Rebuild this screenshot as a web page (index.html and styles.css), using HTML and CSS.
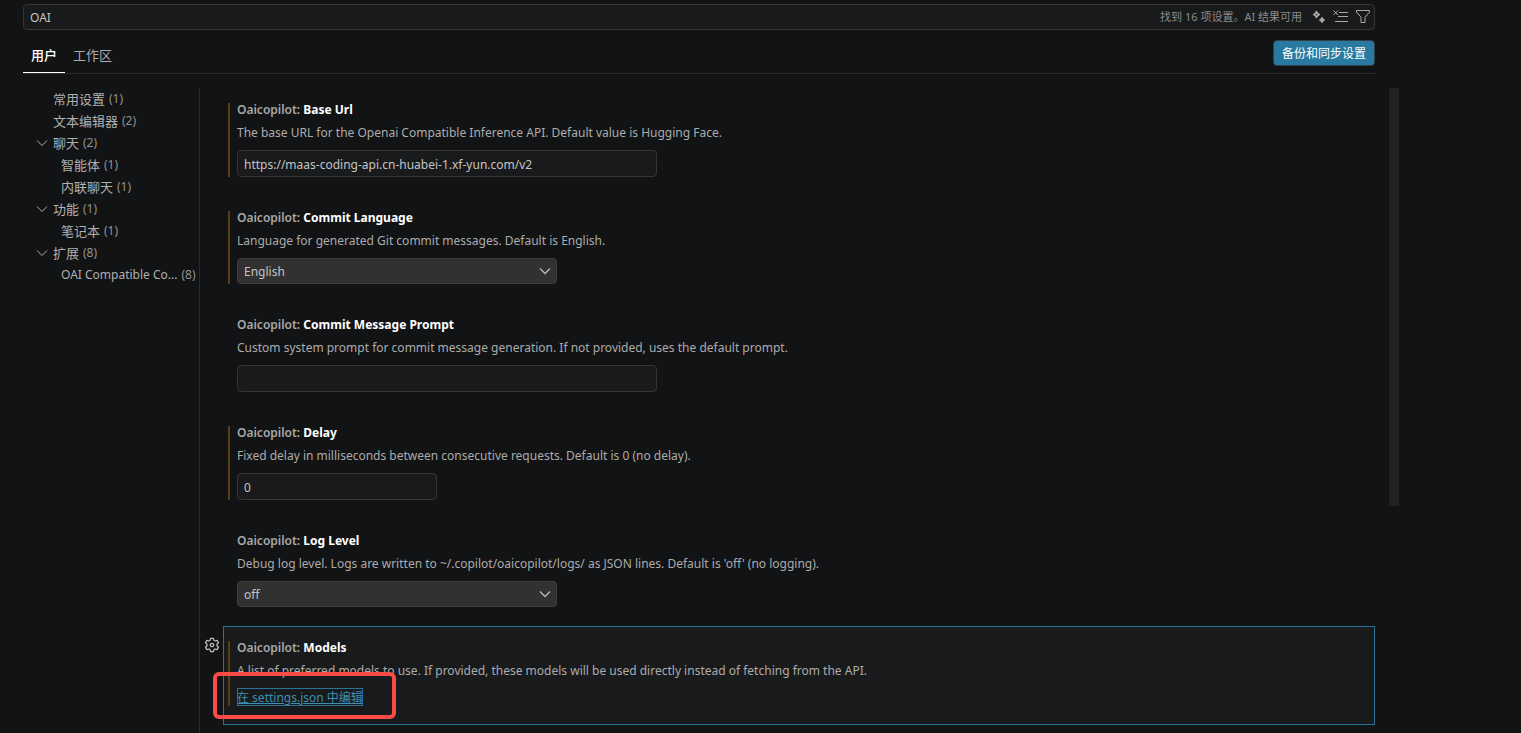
FILE: index.html
```html
<!DOCTYPE html>
<html lang="zh-CN">
<head>
<meta charset="utf-8">
<title>设置</title>
<link rel="stylesheet" href="styles.css">
</head>
<body>
<div class="editor">
  <header class="header">
    <div class="search">
      <input class="search-input" type="text" value="OAI" aria-label="搜索设置">
      <span class="search-count">找到 16 项设置。AI 结果可用</span>
      <button class="icon-button" type="button" aria-label="AI 结果">
        <svg width="16" height="16" viewBox="0 0 16 16" fill="none" stroke="currentColor" stroke-width="1.800" stroke-linejoin="round"><path d="M5.500 2.800L6.500 4.500L8.200 5.500L6.500 6.500L5.500 8.200L4.500 6.500L2.800 5.500L4.500 4.500Z"/><path d="M11 9L11.700 10.300L13 11L11.700 11.700L11 13L10.300 11.700L9 11L10.300 10.300Z"/></svg>
      </button>
      <button class="icon-button" type="button" aria-label="清除搜索">
        <svg width="16" height="16" viewBox="0 0 16 16" fill="none" stroke="currentColor"><path d="M.5 1.500l4.500 4.500M5 1.500L.5 6M6 3.500h9M5 7.500h10M2 12.500h13"/></svg>
      </button>
      <button class="icon-button" type="button" aria-label="筛选设置">
        <svg width="16" height="16" viewBox="0 0 16 16" fill="none" stroke="currentColor" stroke-linejoin="round"><path d="M1.500 1.500h13v1.500L10 8.300v5.200H6V8.300L1.500 3z"/></svg>
      </button>
    </div>
    <div class="scope">
      <nav class="tabs">
        <button class="tab tab-active" type="button">用户</button>
        <button class="tab" type="button">工作区</button>
      </nav>
      <button class="sync" type="button">备份和同步设置</button>
    </div>
  </header>

  <main class="body">
    <ul class="toc">
      <li class="toc-row"><span class="twistie"></span>常用设置<span class="count">(1)</span></li>
      <li class="toc-row"><span class="twistie"></span>文本编辑器<span class="count">(2)</span></li>
      <li class="toc-row"><svg class="twistie" viewBox="0 0 16 16"><path d="M3 5.500l5 5 5-5"/></svg>聊天<span class="count">(2)</span></li>
      <li class="toc-row toc-child"><span class="twistie"></span>智能体<span class="count">(1)</span></li>
      <li class="toc-row toc-child"><span class="twistie"></span>内联聊天<span class="count">(1)</span></li>
      <li class="toc-row"><svg class="twistie" viewBox="0 0 16 16"><path d="M3 5.500l5 5 5-5"/></svg>功能<span class="count">(1)</span></li>
      <li class="toc-row toc-child"><span class="twistie"></span>笔记本<span class="count">(1)</span></li>
      <li class="toc-row"><svg class="twistie" viewBox="0 0 16 16"><path d="M3 5.500l5 5 5-5"/></svg>扩展<span class="count">(8)</span></li>
      <li class="toc-row toc-child"><span class="twistie"></span>OAI Compatible Co...<span class="count">(8)</span></li>
    </ul>

    <div class="list">
      <section class="item">
        <div class="item-content modified">
          <label class="title" for="base-url">Oaicopilot: <b>Base Url</b></label>
          <p class="desc">The base URL for the Openai Compatible Inference API. Default value is Hugging Face.</p>
          <input class="field" id="base-url" type="text" value="https://maas-coding-api.cn-huabei-1.xf-yun.com/v2">
        </div>
      </section>
      <section class="item">
        <div class="item-content modified">
          <label class="title" for="commit-language">Oaicopilot: <b>Commit Language</b></label>
          <p class="desc">Language for generated Git commit messages. Default is English.</p>
          <div class="select-box">
            <select class="select" id="commit-language"><option>English</option></select>
            <svg class="select-arrow" viewBox="0 0 16 16"><path d="M3 5.500l5 5 5-5"/></svg>
          </div>
        </div>
      </section>
      <section class="item">
        <div class="item-content">
          <label class="title" for="commit-prompt">Oaicopilot: <b>Commit Message Prompt</b></label>
          <p class="desc">Custom system prompt for commit message generation. If not provided, uses the default prompt.</p>
          <input class="field" id="commit-prompt" type="text">
        </div>
      </section>
      <section class="item">
        <div class="item-content modified">
          <label class="title" for="delay">Oaicopilot: <b>Delay</b></label>
          <p class="desc">Fixed delay in milliseconds between consecutive requests. Default is 0 (no delay).</p>
          <input class="field field-number" id="delay" type="text" inputmode="numeric" value="0">
        </div>
      </section>
      <section class="item">
        <div class="item-content">
          <label class="title" for="log-level">Oaicopilot: <b>Log Level</b></label>
          <p class="desc">Debug log level. Logs are written to ~/.copilot/oaicopilot/logs/ as JSON lines. Default is 'off' (no logging).</p>
          <div class="select-box">
            <select class="select" id="log-level"><option>off</option></select>
            <svg class="select-arrow" viewBox="0 0 16 16"><path d="M3 5.500l5 5 5-5"/></svg>
          </div>
        </div>
      </section>
      <section class="item item-focused">
        <button class="gear" type="button" aria-label="更多操作">
          <svg width="16" height="16" viewBox="0 0 16 16" fill="none" stroke="currentColor" stroke-width="1.300" stroke-linejoin="round"><path d="M6.600 1.300h2.800l.5 2 1.200.7 2-.6 1.400 2.400-1.500 1.400v1.600l1.500 1.400-1.400 2.400-2-.6-1.200.7-.5 2H6.600l-.5-2-1.200-.7-2 .6-1.400-2.400L3 8.800V7.200L1.500 5.800l1.400-2.400 2 .6 1.200-.7z"/><circle cx="8" cy="8" r="1.700"/></svg>
        </button>
        <div class="item-content modified">
          <h3 class="title">Oaicopilot: <b>Models</b></h3>
          <p class="desc">A list of preferred models to use. If provided, these models will be used directly instead of fetching from the API.</p>
          <a class="edit-link" href="#">在 settings.json 中编辑</a>
        </div>
        <span class="highlight"></span>
      </section>
    </div>
    <div class="scrollbar"></div>
  </main>
</div>
</body>
</html>
```
FILE: styles.css
```css
* {
  box-sizing: border-box;
}

body {
  margin: 0;
  background: #121314;
  color: #bababa;
  font-family: "Noto Sans", "Noto Sans CJK SC", sans-serif;
  font-size: 12px;
  line-height: 18px;
}

button,
input,
select {
  margin: 0;
  font: inherit;
  color: inherit;
}

button {
  padding: 0;
  border: 0;
  background: none;
}

.editor {
  display: flex;
  flex-direction: column;
  height: 100vh;
  padding: 4px 122px 0 23px;
  overflow: hidden;
}

.header {
  margin-right: 24px;
}

.search {
  display: flex;
  align-items: center;
  gap: 6px;
  height: 26px;
  padding: 0 3px 0 6px;
  border: 1px solid #333536;
  border-radius: 4px;
  background: #191a1b;
}

.search-input {
  flex: 1;
  min-width: 0;
  padding: 1px 0 0;
  border: 0;
  outline: 0;
  background: none;
  color: #c4c4c4;
}

.search-count {
  margin-right: 3px;
  color: #8c8c8c;
  font-size: 11px;
}

.icon-button {
  width: 16px;
  height: 16px;
  color: #a8a8a8;
}

.icon-button svg,
.gear svg {
  display: block;
}

.scope {
  display: flex;
  justify-content: space-between;
  align-items: flex-start;
  height: 44px;
  padding-top: 10px;
  border-bottom: 1px solid #2a2b2c;
}

.tabs {
  display: flex;
}

.tab {
  height: 33px;
  padding: 0 8px 2px;
  border-bottom: 1px solid transparent;
  color: #adadad;
  font-size: 13px;
}

.tab-active {
  border-bottom-color: #fff;
  color: #fff;
  font-weight: 500;
}

.sync {
  height: 26px;
  padding: 1px 8px 0;
  border: 1px solid #333f45;
  border-radius: 4px;
  background: #297aa0;
  color: #fff;
}

.body {
  flex: 1;
  display: flex;
  min-height: 0;
  padding-top: 14px;
}

.toc {
  flex: none;
  width: 177px;
  margin: 0;
  padding: 0 0 0 11px;
  border-right: 1px solid #2a2b2c;
  list-style: none;
  color: #b0b0b0;
}

.toc-row {
  display: flex;
  align-items: center;
  height: 22px;
  font-size: 13px;
  white-space: nowrap;
}

.toc-child {
  padding-left: 8px;
}

.toc-child:last-child {
  font-size: 12px;
}

.twistie {
  flex: none;
  width: 16px;
  height: 16px;
  margin-right: 3px;
}

.twistie path,
.select-arrow path {
  fill: none;
  stroke: currentColor;
}

.select-arrow path {
  stroke-width: 1.3;
}

.count {
  margin-left: 4px;
  color: #929292;
  font-size: 12px;
}

.list {
  flex: 1;
  min-width: 0;
  margin-left: 23px;
}

.item {
  position: relative;
  padding: 15px 5px 19px;
}

.item-content {
  padding-left: 7px;
  border-left: 2px solid transparent;
}

.modified {
  border-left-color: #5c3f10;
}

.title {
  display: block;
  margin: 0 0 7px;
  font-size: 12px;
  font-weight: 600;
  line-height: 14px;
  color: #a8a8a8;
}

.title b {
  font-weight: 700;
  color: #fff;
}

.desc {
  margin: 0 0 8px;
  color: #acacac;
}

.field {
  display: block;
  width: 420px;
  height: 27px;
  padding: 1px 6px 0;
  border: 1px solid #333536;
  border-radius: 4px;
  background: #191a1b;
  color: #c4c4c4;
}

.field-number {
  width: 200px;
}

.select-box {
  position: relative;
  width: 320px;
}

.select {
  appearance: none;
  display: block;
  width: 100%;
  height: 26px;
  padding: 1px 24px 0 6px;
  border: 1px solid #3b3c3d;
  border-radius: 4px;
  background: #313131;
  color: #c4c4c4;
}

.select-arrow {
  position: absolute;
  top: 5px;
  right: 4px;
  width: 16px;
  height: 16px;
  pointer-events: none;
}

.item-focused {
  background: #191a1b;
  outline: 1px solid #2a7396;
  outline-offset: -1px;
}

.gear {
  position: absolute;
  top: 11px;
  left: -19px;
  width: 16px;
  height: 16px;
}

.edit-link {
  display: block;
  width: fit-content;
  padding-top: 1px;
  outline: 1px solid #2a7396;
  outline-offset: -1px;
  color: #3c8fb5;
  line-height: 17px;
  text-decoration: underline;
}

.highlight {
  position: absolute;
  top: 46px;
  left: -10px;
  width: 183px;
  height: 47px;
  border: 4px solid #fb4b46;
  border-radius: 6px;
  pointer-events: none;
}

.scrollbar {
  flex: none;
  width: 10px;
  height: 418px;
  margin-left: 14px;
  background: #202221;
}
```
